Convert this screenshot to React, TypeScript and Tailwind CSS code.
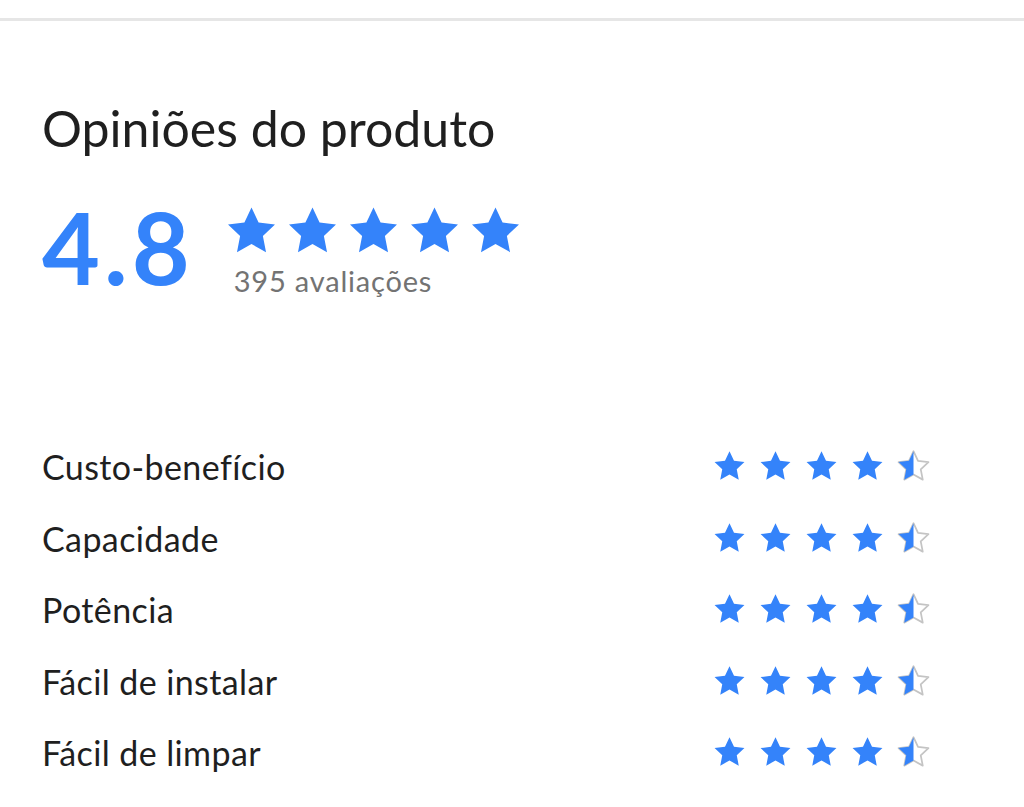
import React from "react";

const STAR = "M12 1.5l3.09 6.62 7.16.87-5.28 4.93 1.37 7.08L12 17.5l-6.34 3.5 1.37-7.08L1.75 8.99l7.16-.87z";

function Star({ size, kind }: { size: number; kind: "full" | "half" }) {
  return (
    <svg width={size} height={size} viewBox="0 0 24 24" className="block">
      {kind === "full" ? (
        <path d={STAR} fill="#3483fa" />
      ) : (
        <>
          <defs>
            <clipPath id="lefthalf">
              <rect x="0" y="0" width="12" height="24" />
            </clipPath>
          </defs>
          <path d={STAR} fill="none" stroke="#c4c4c4" strokeWidth="1.2" strokeLinejoin="round" />
          <path d={STAR} fill="#3483fa" clipPath="url(#lefthalf)" />
        </>
      )}
    </svg>
  );
}

const rows = ["Custo-benefício", "Capacidade", "Potência", "Fácil de instalar", "Fácil de limpar"];

export default function App() {
  return (
    <div className="w-[1024px] h-[807px] bg-white overflow-hidden" style={{ fontFamily: "Lato, 'Open Sans', sans-serif" }}>
      <div className="h-[18px]" />
      <div className="h-[3px] bg-[#e6e6e6]" />
      <div className="pl-[42px] pr-[93px]">
        <h1 className="mt-[79px] text-[50px] leading-[56px] text-[#1f1f1f] font-normal">Opiniões do produto</h1>
        <div className="mt-[45px] flex items-start">
          <div className="text-[100px] leading-[90px] font-bold text-[#3483fa] tracking-[4px]">4.8</div>
          <div className="ml-[30px] flex flex-col">
            <div className="flex gap-[6px] mt-[3px]">
              {[0, 1, 2, 3, 4].map((i) => (
                <Star key={i} size={55} kind="full" />
              ))}
            </div>
            <div className="mt-[6px] ml-[10px] text-[29px] leading-[32px] tracking-[0.8px] text-[#737373]">395 avaliações</div>
          </div>
        </div>
        <div className="mt-[134px] flex flex-col">
          {rows.map((r) => (
            <div key={r} className="flex items-center justify-between h-[71.5px]">
              <span className="text-[34px] tracking-[0.4px] text-[#1f1f1f]">{r}</span>
              <div className="flex gap-[11px]">
                <Star size={35} kind="full" />
                <Star size={35} kind="full" />
                <Star size={35} kind="full" />
                <Star size={35} kind="full" />
                <Star size={35} kind="half" />
              </div>
            </div>
          ))}
        </div>
      </div>
    </div>
  );
}
